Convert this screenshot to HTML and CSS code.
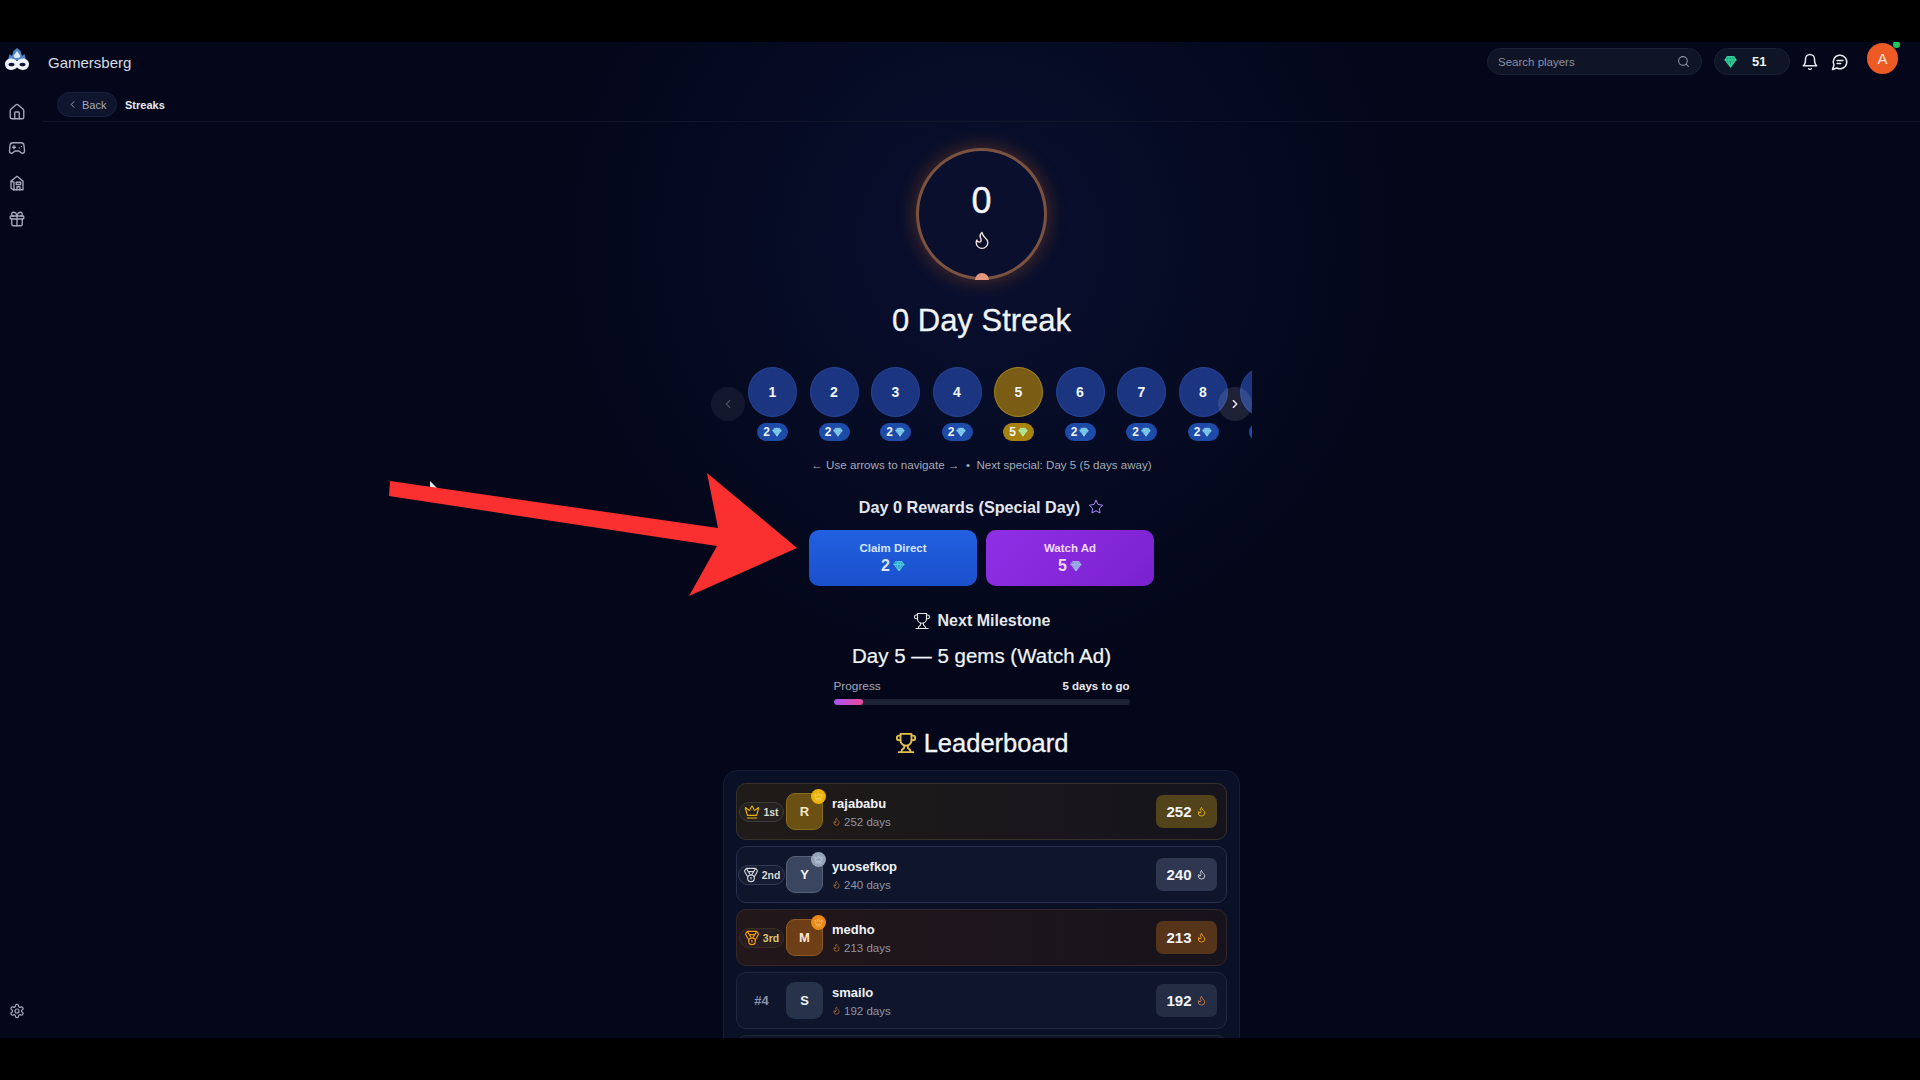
FILE: index.html
```html
<!DOCTYPE html>
<html lang="en">
<head>
    <meta charset="UTF-8">
    <meta name="viewport" content="width=device-width, initial-scale=1.0">
    <title>Gamersberg | Streaks</title>
    <link rel="stylesheet" href="styles.css">
</head>
<body>
    <svg class="sprite" width="0" height="0">
        <symbol id="i-flame" viewBox="0 0 24 24"><path d="M8.5 14.5A2.5 2.5 0 0 0 11 12c0-1.38-.5-2-1-3-1.072-2.143-.224-4.054 2-6 .5 2.5 2 4.9 4 6.5 2 1.6 3 3.5 3 5.5a7 7 0 1 1-14 0c0-1.153.433-2.294 1-3a2.5 2.5 0 0 0 2.5 2.5z"/></symbol>
        <symbol id="i-gem" viewBox="0 0 24 24"><path d="M6 3h12l4 6-10 13L2 9Z"/><path d="M11 3 8 9l4 13 4-13-3-6"/><path d="M2 9h20"/></symbol>
        <symbol id="i-trophy" viewBox="0 0 24 24"><path d="M6 9H4.5a2.5 2.5 0 0 1 0-5H6"/><path d="M18 9h1.5a2.5 2.5 0 0 0 0-5H18"/><path d="M4 22h16"/><path d="M10 14.66V17c0 .55-.47.98-.97 1.21C7.85 18.75 7 20.24 7 22"/><path d="M14 14.66V17c0 .55.47.98.97 1.21C16.15 18.75 17 20.24 17 22"/><path d="M18 2H6v7a6 6 0 0 0 12 0V2Z"/></symbol>
        <symbol id="i-crown" viewBox="0 0 24 24"><path d="M11.562 3.266a.5.5 0 0 1 .876 0L15.39 8.87a1 1 0 0 0 1.516.294L21.183 5.5a.5.5 0 0 1 .798.519l-2.834 10.246a1 1 0 0 1-.956.734H5.81a1 1 0 0 1-.957-.734L2.02 6.02a.5.5 0 0 1 .798-.519l4.276 3.664a1 1 0 0 0 1.516-.294z"/><path d="M5 21h14"/></symbol>
        <symbol id="i-medal" viewBox="0 0 24 24"><path d="M7.21 15 2.66 7.14a2 2 0 0 1 .13-2.2L4.4 2.8A2 2 0 0 1 6 2h12a2 2 0 0 1 1.6.8l1.6 2.14a2 2 0 0 1 .14 2.2L16.79 15"/><path d="M11 12 5.12 2.2"/><path d="m13 12 5.88-9.8"/><path d="M8 7h8"/><circle cx="12" cy="17" r="5"/><path d="M12 18v-2h-.5"/></symbol>
    </svg>

    <div class="app">
        <header class="topbar">
            <div class="brand">
                <svg class="logo" viewBox="0 0 26 26">
                    <path class="logo-top" d="M4 13 5.500 7l2.500 2 1.500-5L13 1l3.500 3L18 9l2.500-2L22 13z"/>
                    <path class="logo-tip" d="M9.500 9 13 4l3.500 5-1.500 2h-4z"/>
                    <path class="logo-mask" d="M1 17c0-3 2.500-5.500 6-5.500 2.500 0 4.500 1 6 2.500 1.500-1.500 3.500-2.500 6-2.500 3.500 0 6 2.500 6 5.500s-2.500 6-6 6c-2.500 0-4.500-1-6-2.500-1.500 1.500-3.500 2.500-6 2.500-3.500 0-6-3-6-6z"/>
                    <ellipse class="logo-eye" cx="7.500" cy="17.500" rx="3" ry="1.800"/>
                    <ellipse class="logo-eye" cx="18.500" cy="17.500" rx="3" ry="1.800"/>
                </svg>
                <span class="brand-name">Gamersberg</span>
            </div>
            <div class="top-actions">
                <div class="search">
                    <span>Search players</span>
                    <svg class="ico search-ico" viewBox="0 0 24 24"><circle cx="11" cy="11" r="8"/><path d="m21 21-4.300-4.300"/></svg>
                </div>
                <div class="gem-pill">
                    <svg class="ico gem-top"><use href="#i-gem"/></svg>
                    <span>51</span>
                </div>
                <svg class="ico top-ico" viewBox="0 0 24 24"><path d="M6 8a6 6 0 0 1 12 0c0 7 3 9 3 9H3s3-2 3-9"/><path d="M10.300 21a1.940 1.940 0 0 0 3.400 0"/></svg>
                <svg class="ico top-ico" viewBox="0 0 24 24"><path d="M7.900 20A9 9 0 1 0 4 16.100L2 22Z"/><path d="M8 10h8"/><path d="M8 14h5"/></svg>
                <div class="avatar-top">A<span class="online-dot"></span></div>
            </div>
        </header>

        <div class="body">
            <aside class="sidebar">
                <svg class="ico side-ico" viewBox="0 0 24 24"><path d="M15 21v-8a1 1 0 0 0-1-1h-4a1 1 0 0 0-1 1v8"/><path d="M3 10a2 2 0 0 1 .709-1.528l7-5.999a2 2 0 0 1 2.582 0l7 5.999A2 2 0 0 1 21 10v9a2 2 0 0 1-2 2H5a2 2 0 0 1-2-2z"/></svg>
                <svg class="ico side-ico" viewBox="0 0 24 24"><path d="M6 11h4"/><path d="M8 9v4"/><path d="M15 12h.01"/><path d="M18 10h.01"/><path d="M17.320 5H6.680a4 4 0 0 0-3.978 3.590c-.006.052-.01.101-.017.152C2.604 9.416 2 14.456 2 16a3 3 0 0 0 3 3c1 0 1.500-.5 2-1l1.414-1.414A2 2 0 0 1 9.828 16h4.344a2 2 0 0 1 1.414.586L17 18c.5.5 1 1 2 1a3 3 0 0 0 3-3c0-1.545-.604-6.584-.685-7.258-.007-.05-.011-.1-.017-.151A4 4 0 0 0 17.320 5z"/></svg>
                <svg class="ico side-ico" viewBox="0 0 24 24"><path d="M4 9.500 12 3l8 6.500V21H8"/><path d="M4 9.500V19l4 2.500V11l-4-1.500"/><path d="M11 11h6v3h-6z"/><path d="M12 21v-4h4v4"/></svg>
                <svg class="ico side-ico" viewBox="0 0 24 24"><rect x="3" y="8" width="18" height="4" rx="1"/><path d="M12 8v13"/><path d="M19 12v7a2 2 0 0 1-2 2H7a2 2 0 0 1-2-2v-7"/><path d="M7.500 8a2.500 2.500 0 0 1 0-5A4.800 8 0 0 1 12 8a4.800 8 0 0 1 4.500-5 2.500 2.500 0 0 1 0 5"/></svg>
                <svg class="ico side-ico settings" viewBox="0 0 24 24"><path d="M12.220 2h-.44a2 2 0 0 0-2 2v.18a2 2 0 0 1-1 1.730l-.43.25a2 2 0 0 1-2 0l-.15-.08a2 2 0 0 0-2.730.73l-.22.38a2 2 0 0 0 .73 2.730l.15.1a2 2 0 0 1 1 1.720v.51a2 2 0 0 1-1 1.740l-.15.09a2 2 0 0 0-.73 2.730l.22.38a2 2 0 0 0 2.730.73l.15-.08a2 2 0 0 1 2 0l.43.25a2 2 0 0 1 1 1.730V20a2 2 0 0 0 2 2h.44a2 2 0 0 0 2-2v-.18a2 2 0 0 1 1-1.730l.43-.25a2 2 0 0 1 2 0l.15.08a2 2 0 0 0 2.730-.73l.22-.39a2 2 0 0 0-.73-2.730l-.15-.08a2 2 0 0 1-1-1.740v-.5a2 2 0 0 1 1-1.740l.15-.09a2 2 0 0 0 .73-2.730l-.22-.38a2 2 0 0 0-2.730-.73l-.15.08a2 2 0 0 1-2 0l-.43-.25a2 2 0 0 1-1-1.730V4a2 2 0 0 0-2-2z"/><circle cx="12" cy="12" r="3"/></svg>
            </aside>

            <main class="main">
                <div class="crumbs">
                    <a class="back-btn"><svg class="ico back-ico" viewBox="0 0 24 24"><path d="m15 18-6-6 6-6"/></svg>Back</a>
                    <span class="crumb-current">Streaks</span>
                </div>

                <section class="streak">
                    <div class="ring">
                        <span class="ring-num">0</span>
                        <svg class="ico ring-flame"><use href="#i-flame"/></svg>
                        <span class="ring-knob"></span>
                    </div>
                    <h1 class="streak-title">0 Day Streak</h1>

                    <div class="carousel-wrap">
                        <button class="nav-btn nav-prev"><svg class="ico" viewBox="0 0 24 24"><path d="m15 18-6-6 6-6"/></svg></button>
                        <div class="carousel">
                            <div class="day"><div class="day-num">1</div><div class="day-gem">2<svg class="ico"><use href="#i-gem"/></svg></div></div>
                            <div class="day"><div class="day-num">2</div><div class="day-gem">2<svg class="ico"><use href="#i-gem"/></svg></div></div>
                            <div class="day"><div class="day-num">3</div><div class="day-gem">2<svg class="ico"><use href="#i-gem"/></svg></div></div>
                            <div class="day"><div class="day-num">4</div><div class="day-gem">2<svg class="ico"><use href="#i-gem"/></svg></div></div>
                            <div class="day special"><div class="day-num">5</div><div class="day-gem">5<svg class="ico"><use href="#i-gem"/></svg></div></div>
                            <div class="day"><div class="day-num">6</div><div class="day-gem">2<svg class="ico"><use href="#i-gem"/></svg></div></div>
                            <div class="day"><div class="day-num">7</div><div class="day-gem">2<svg class="ico"><use href="#i-gem"/></svg></div></div>
                            <div class="day"><div class="day-num">8</div><div class="day-gem">2<svg class="ico"><use href="#i-gem"/></svg></div></div>
                            <div class="day"><div class="day-num"></div><div class="day-gem"></div></div>
                        </div>
                        <button class="nav-btn nav-next"><svg class="ico" viewBox="0 0 24 24"><path d="m9 18 6-6-6-6"/></svg></button>
                    </div>

                    <p class="hint">← Use arrows to navigate → &nbsp;•&nbsp; Next special: Day 5 (5 days away)</p>

                    <h3 class="rewards-title">Day 0 Rewards (Special Day)
                        <svg class="ico star-ico" viewBox="0 0 24 24"><polygon points="12 2 15.090 8.260 22 9.270 17 14.140 18.180 21.020 12 17.770 5.820 21.020 7 14.140 2 9.270 8.910 8.260 12 2"/></svg>
                    </h3>
                    <div class="claim-row">
                        <button class="claim claim-direct">
                            <span class="claim-label">Claim Direct</span>
                            <span class="claim-value">2<svg class="ico"><use href="#i-gem"/></svg></span>
                        </button>
                        <button class="claim claim-ad">
                            <span class="claim-label">Watch Ad</span>
                            <span class="claim-value">5<svg class="ico"><use href="#i-gem"/></svg></span>
                        </button>
                    </div>

                    <h3 class="milestone-title"><svg class="ico"><use href="#i-trophy"/></svg>Next Milestone</h3>
                    <div class="milestone-name">Day 5 — 5 gems (Watch Ad)</div>
                    <div class="progress-labels">
                        <span>Progress</span>
                        <strong>5 days to go</strong>
                    </div>
                    <div class="progress-bar"><div class="progress-fill" style="width:10%"></div></div>

                    <h2 class="board-title"><svg class="ico"><use href="#i-trophy"/></svg>Leaderboard</h2>
                    <div class="board">
                        <div class="row gold">
                            <div class="rank"><span class="rank-pill"><svg class="ico"><use href="#i-crown"/></svg>1st</span></div>
                            <div class="av">R<span class="av-badge"><svg class="ico"><use href="#i-crown"/></svg></span></div>
                            <div class="who">
                                <div class="who-name">rajababu</div>
                                <div class="who-days"><svg class="ico"><use href="#i-flame"/></svg>252 days</div>
                            </div>
                            <div class="score">252<svg class="ico"><use href="#i-flame"/></svg></div>
                        </div>
                        <div class="row silver">
                            <div class="rank"><span class="rank-pill"><svg class="ico"><use href="#i-medal"/></svg>2nd</span></div>
                            <div class="av">Y<span class="av-badge"><svg class="ico"><use href="#i-crown"/></svg></span></div>
                            <div class="who">
                                <div class="who-name">yuosefkop</div>
                                <div class="who-days"><svg class="ico"><use href="#i-flame"/></svg>240 days</div>
                            </div>
                            <div class="score">240<svg class="ico"><use href="#i-flame"/></svg></div>
                        </div>
                        <div class="row bronze">
                            <div class="rank"><span class="rank-pill"><svg class="ico"><use href="#i-medal"/></svg>3rd</span></div>
                            <div class="av">M<span class="av-badge"><svg class="ico"><use href="#i-crown"/></svg></span></div>
                            <div class="who">
                                <div class="who-name">medho</div>
                                <div class="who-days"><svg class="ico"><use href="#i-flame"/></svg>213 days</div>
                            </div>
                            <div class="score">213<svg class="ico"><use href="#i-flame"/></svg></div>
                        </div>
                        <div class="row">
                            <div class="rank"><span class="rank-plain">#4</span></div>
                            <div class="av">S</div>
                            <div class="who">
                                <div class="who-name">smailo</div>
                                <div class="who-days"><svg class="ico"><use href="#i-flame"/></svg>192 days</div>
                            </div>
                            <div class="score">192<svg class="ico"><use href="#i-flame"/></svg></div>
                        </div>
                        <div class="row"></div>
                    </div>
                </section>
            </main>
        </div>

        <!-- annotation drawn over the recording -->
        <svg class="annotation" viewBox="0 0 1920 996">
            <polygon class="cursor" points="430,439 430,450 433,447 438,447"/>
            <polygon class="red-arrow" points="390,439 389,454 717,504 689,554 797,506 707,431 718,486"/>
        </svg>
    </div>
</body>
</html>
```

FILE: styles.css
```css
:root {
    --bg: #04071a;
    --text: #f1f5f9;
    --muted: #94a3b8;
    --line: #0f1429;
    --blue: #1b3581;
    --gold: #eab308;
    --orange: #f97316;
}

* {
    box-sizing: border-box;
    margin: 0;
    padding: 0;
}

body {
    background: #000;
    font-family: 'Liberation Sans', Arial, sans-serif;
    color: var(--text);
    height: 1080px;
    padding-top: 42px;
    overflow: hidden;
}

.sprite {
    position: absolute;
}

.ico {
    fill: none;
    stroke: currentColor;
    stroke-width: 2;
    stroke-linecap: round;
    stroke-linejoin: round;
    flex-shrink: 0;
}

.app {
    height: 996px;
    position: relative;
    overflow: hidden;
    background:
        radial-gradient(circle 420px at 981px 200px, #091030 0%, rgba(9, 16, 48, 0) 100%),
        var(--bg);
}

/* top bar */
.topbar {
    height: 39px;
    display: flex;
    align-items: center;
    justify-content: space-between;
    padding-right: 22px;
}

.brand {
    display: flex;
    align-items: center;
    gap: 18px;
    padding-left: 4px;
}

.logo {
    width: 26px;
    height: 26px;
    margin-top: -3px;
}

.logo-top { fill: #4f86c6; }
.logo-tip { fill: #dbe7f7; }
.logo-mask { fill: #eef3fb; }
.logo-eye { fill: #0a1230; }

.brand-name {
    font-size: 15px;
    color: #d9dde6;
    margin-top: 2px;
}

.top-actions {
    display: flex;
    align-items: center;
}

.search {
    width: 215px;
    height: 27px;
    border-radius: 14px;
    background: #0f1426;
    border: 1px solid #1b2136;
    display: flex;
    align-items: center;
    justify-content: space-between;
    padding: 0 11px 0 10px;
    font-size: 11.5px;
    color: #8a91a3;
}

.search-ico {
    width: 13px;
    height: 13px;
}

.gem-pill {
    width: 76px;
    height: 27px;
    margin-left: 12px;
    border-radius: 14px;
    background: #0d1526;
    border: 1px solid #1b2136;
    display: flex;
    align-items: center;
    padding-left: 9px;
    gap: 15px;
    font-size: 13px;
    font-weight: bold;
}

.gem-top {
    width: 13px;
    height: 13px;
    color: #34d399;
    fill: #1f9d78;
}

.top-ico {
    width: 18px;
    height: 18px;
    margin-left: 12px;
    color: #e5e7eb;
}

.gem-pill + .top-ico {
    margin-left: 11px;
}

.avatar-top {
    width: 31px;
    height: 31px;
    border-radius: 50%;
    margin: -6px 0 0 18px;
    background: #ee5a24;
    color: #fde8dc;
    font-size: 15px;
    display: flex;
    align-items: center;
    justify-content: center;
    position: relative;
}

.online-dot {
    position: absolute;
    top: -2px;
    right: -2px;
    width: 7px;
    height: 7px;
    border-radius: 50%;
    background: #22c55e;
}

/* sidebar + main */
.body {
    display: flex;
    height: 957px;
}

.sidebar {
    width: 43px;
    flex-shrink: 0;
    display: flex;
    flex-direction: column;
    gap: 17.5px;
    padding: 22px 0 19px 8px;
}

.side-ico {
    width: 18px;
    height: 18px;
    color: #a3a9b8;
    stroke-width: 1.8;
}

.settings {
    margin-top: auto;
    width: 16px;
    height: 16px;
    margin-left: 1px;
}

.main {
    flex: 1;
    min-width: 0;
    overflow: hidden;
}

.crumbs {
    display: flex;
    align-items: center;
    gap: 8px;
    padding: 11px 0 4px 14px;
    border-bottom: 1px solid var(--line);
}

.back-btn {
    width: 60px;
    height: 25px;
    border-radius: 13px;
    background: #10152e;
    border: 1px solid #1a2040;
    display: flex;
    align-items: center;
    gap: 4px;
    padding-left: 9px;
    font-size: 11px;
    color: #a4a9b8;
}

.back-ico {
    width: 11px;
    height: 11px;
}

.crumb-current {
    font-size: 11px;
    font-weight: bold;
    color: #e8eaf0;
}

/* streak column */
.streak {
    display: flex;
    flex-direction: column;
    align-items: center;
    padding-top: 26px;
}

.ring {
    width: 131px;
    height: 132px;
    border-radius: 50%;
    border: 3px solid #7a5240;
    background: #0a0f2e;
    box-shadow: 0 0 20px rgba(249, 115, 22, 0.32);
    display: flex;
    flex-direction: column;
    align-items: center;
    position: relative;
    padding-top: 31px;
}

.ring-num {
    font-size: 36px;
    line-height: 38px;
    -webkit-text-stroke: 0.4px var(--text);
}

.ring-flame {
    width: 20px;
    height: 20px;
    margin-top: 10px;
    color: #f5e6d8;
    stroke-width: 1.6;
}

.ring-knob {
    position: absolute;
    bottom: -3px;
    left: 50%;
    width: 14px;
    height: 7px;
    margin-left: -7px;
    border-radius: 7px 7px 0 0;
    background: #e0957c;
}

.streak-title {
    font-size: 31px;
    font-weight: normal;
    line-height: 36px;
    margin-top: 23px;
    -webkit-text-stroke: 0.3px var(--text);
}

.carousel-wrap {
    width: 541px;
    margin-top: 28px;
    position: relative;
}

.carousel {
    display: flex;
    gap: 12.5px;
    padding-left: 37px;
    overflow: hidden;
}

.day {
    width: 49px;
    flex-shrink: 0;
    display: flex;
    flex-direction: column;
    align-items: center;
    gap: 6px;
}

.day-num {
    width: 49px;
    height: 50px;
    border-radius: 50%;
    background: var(--blue);
    border: 1px solid #264594;
    display: flex;
    align-items: center;
    justify-content: center;
    font-size: 14px;
    font-weight: bold;
}

.day-gem {
    width: 31px;
    height: 18px;
    border-radius: 9px;
    background: #1e4aa8;
    display: flex;
    align-items: center;
    justify-content: center;
    gap: 2px;
    font-size: 12px;
    font-weight: bold;
}

.day-gem .ico {
    width: 10px;
    height: 10px;
    color: #8fd8f5;
    fill: #6fb9dd;
    stroke-width: 1.5;
}

.special .day-num {
    background: #7a5c14;
    border-color: #a88420;
}

.special .day-gem {
    background: #a8820f;
}

.special .day-gem .ico {
    color: #bef0a8;
    fill: #a3d98c;
}

.nav-btn {
    position: absolute;
    top: 20px;
    width: 34px;
    height: 34px;
    border: none;
    border-radius: 50%;
    background: rgba(255, 255, 255, 0.1);
    color: #fff;
    display: flex;
    align-items: center;
    justify-content: center;
}

.nav-btn .ico {
    width: 14px;
    height: 14px;
}

.nav-prev {
    left: 0;
    color: #4a4f63;
    background: rgba(255, 255, 255, 0.06);
}

.nav-next {
    right: 0;
}

.hint {
    font-size: 11.6px;
    line-height: 16px;
    margin-top: 16px;
    color: #a3aab8;
}

.rewards-title {
    display: flex;
    align-items: center;
    gap: 8px;
    font-size: 16.2px;
    line-height: 20px;
    font-weight: bold;
    color: #e2e6ee;
    margin-top: 24px;
}

.star-ico {
    width: 16px;
    height: 16px;
    color: #a78bfa;
    stroke-width: 1.5;
}

.claim-row {
    display: grid;
    grid-template-columns: 168px 168px;
    gap: 9px;
    margin-top: 13px;
}

.claim {
    height: 56px;
    border: none;
    border-radius: 10px;
    color: #fff;
    font-family: inherit;
    display: flex;
    flex-direction: column;
    align-items: center;
    justify-content: center;
    gap: 1px;
}

.claim-direct {
    background: linear-gradient(180deg, #2160e0 0%, #1b50cc 100%);
}

.claim-ad {
    background: linear-gradient(135deg, #8f2fe6 0%, #7a22cf 100%);
}

.claim-label {
    font-size: 11.5px;
    line-height: 15px;
    font-weight: bold;
    color: #d7e6ff;
}

.claim-ad .claim-label {
    color: #f3d9ff;
}

.claim-value {
    display: flex;
    align-items: center;
    gap: 3px;
    font-size: 16px;
    line-height: 18px;
    font-weight: bold;
    color: #dbeafe;
}

.claim-value .ico {
    width: 12px;
    height: 12px;
    color: #5ed4e8;
    fill: #2fa8c8;
    stroke-width: 1.5;
}

.claim-ad .claim-value {
    color: #f3d9ff;
}

.claim-ad .claim-value .ico {
    color: #a5b8f0;
    fill: #8f9be0;
}

.milestone-title {
    display: flex;
    align-items: center;
    gap: 7px;
    font-size: 16px;
    line-height: 20px;
    font-weight: bold;
    color: #e2e6ee;
    margin-top: 25px;
}

.milestone-title .ico {
    width: 18px;
    height: 18px;
    color: #e8e8e8;
    stroke-width: 1.5;
}

.milestone-name {
    font-size: 20.5px;
    line-height: 24px;
    margin-top: 13px;
    -webkit-text-stroke: 0.2px var(--text);
}

.progress-labels {
    width: 296px;
    display: flex;
    justify-content: space-between;
    font-size: 11.8px;
    line-height: 14px;
    margin-top: 11px;
    color: #a3aab8;
}

.progress-labels strong {
    font-size: 11.5px;
    color: #e8eaf0;
}

.progress-bar {
    width: 296px;
    height: 6px;
    border-radius: 3px;
    background: #1c2233;
    margin-top: 6px;
    overflow: hidden;
}

.progress-fill {
    height: 100%;
    border-radius: 3px;
    background: linear-gradient(90deg, #a855f7, #ec4899);
}

.board-title {
    display: flex;
    align-items: center;
    gap: 7px;
    font-size: 25.5px;
    line-height: 28px;
    font-weight: normal;
    margin-top: 24px;
    -webkit-text-stroke: 0.3px var(--text);
}

.board-title .ico {
    width: 22px;
    height: 22px;
    color: #e4c04a;
}

/* leaderboard */
.board {
    width: 517px;
    margin-top: 13px;
    padding: 12px;
    border-radius: 14px;
    background: #0a1026;
    border: 1px solid #161c36;
    display: flex;
    flex-direction: column;
    gap: 6px;
}

.row {
    height: 57px;
    flex-shrink: 0;
    display: flex;
    align-items: center;
    border-radius: 10px;
    border: 1px solid #1f2942;
    background: #0f162c;
    padding: 0 9px 0 3px;
}

.gold {
    background: linear-gradient(90deg, #1f1b18, #15141d);
    border-color: #36322a;
}

.silver {
    background: #0f162c;
    border-color: #27304b;
}

.bronze {
    background: linear-gradient(90deg, #22171a, #17131c);
    border-color: #33262a;
}

.rank {
    width: 43px;
    flex-shrink: 0;
    display: flex;
    justify-content: center;
}

.rank-pill {
    height: 20px;
    padding: 0 4px;
    flex-shrink: 0;
    border-radius: 10px;
    border: 1px solid #3a3a3a;
    background: rgba(255, 255, 255, 0.03);
    display: flex;
    align-items: center;
    gap: 3px;
    font-size: 10.5px;
    font-weight: bold;
    color: #d8d8d0;
}

.rank-pill .ico {
    width: 16px;
    height: 16px;
    stroke-width: 1.7;
}

.gold .rank-pill .ico { color: #eab308; }
.silver .rank-pill .ico { color: #d1d5db; }
.silver .rank-pill { border-color: #333b52; }
.bronze .rank-pill .ico { color: #f59e0b; }
.bronze .rank-pill { color: #d9c66e; border-color: #3a2d22; }

.rank-plain {
    font-size: 13px;
    font-weight: bold;
    color: #8a93a8;
}

.av {
    width: 37px;
    height: 37px;
    margin-left: 3px;
    flex-shrink: 0;
    border-radius: 9px;
    background: #26334a;
    display: flex;
    align-items: center;
    justify-content: center;
    position: relative;
    font-size: 13px;
    font-weight: bold;
    color: #f1f5f9;
}

.gold .av { background: #6b5014; border: 1px solid #8a6c20; color: #f5e6c8; }
.silver .av { background: #3a4560; border: 1px solid #56607a; }
.bronze .av { background: #6e3e16; border: 1px solid #8c5a26; color: #fbe6d2; }

.av-badge {
    position: absolute;
    top: -5px;
    right: -4px;
    width: 15px;
    height: 15px;
    border-radius: 50%;
    display: flex;
    align-items: center;
    justify-content: center;
}

.av-badge .ico {
    width: 9px;
    height: 9px;
    color: rgba(255, 255, 255, 0.45);
}

.gold .av-badge { background: #eab308; }
.silver .av-badge { background: #94a3b8; }
.bronze .av-badge { background: #ea8a14; }

.who {
    margin-left: 9px;
    flex: 1;
    padding-top: 1px;
}

.who-name {
    font-size: 13px;
    line-height: 16px;
    font-weight: bold;
    color: #f1f3f8;
}

.who-days {
    display: flex;
    align-items: center;
    gap: 3px;
    margin-top: 3px;
    font-size: 11.5px;
    line-height: 14px;
    color: #8e95a5;
}

.who-days .ico {
    width: 9px;
    height: 9px;
    color: #b3702f;
}

.score {
    width: 61px;
    height: 33px;
    flex-shrink: 0;
    border-radius: 7px;
    background: #252d44;
    display: flex;
    align-items: center;
    justify-content: center;
    gap: 4px;
    font-size: 15px;
    font-weight: bold;
    color: #f1f3f8;
}

.score .ico {
    width: 11px;
    height: 11px;
    color: #c97a4a;
}

.gold .score { background: #52431a; }
.gold .score .ico { color: #eab308; }
.silver .score { background: #2f3750; }
.silver .score .ico { color: #d1d5db; }
.bronze .score { background: #56341a; }
.bronze .score .ico { color: #f59e0b; }

/* red arrow laid over the video */
.annotation {
    position: absolute;
    top: 0;
    left: 0;
    width: 1920px;
    height: 996px;
    pointer-events: none;
}

.red-arrow { fill: #f9302f; }
.cursor { fill: #e8e8e8; }
```
